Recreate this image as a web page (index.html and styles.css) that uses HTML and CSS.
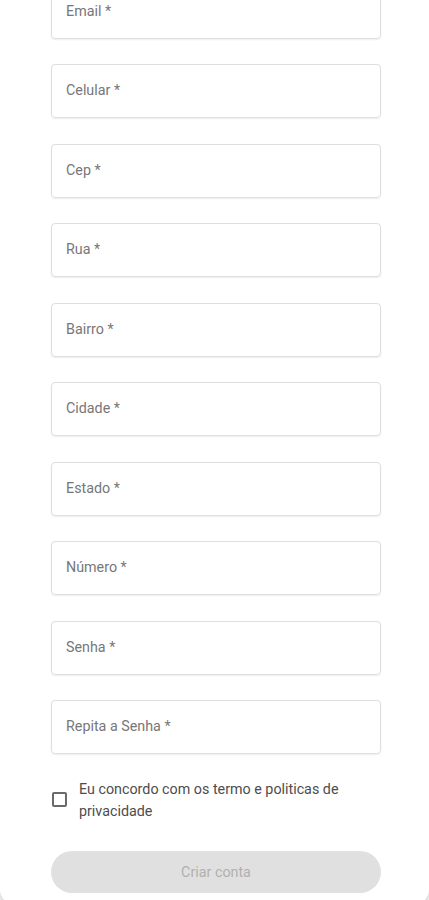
FILE: index.html
```html
<!DOCTYPE html>
<html lang="pt-BR">
<head>
<meta charset="utf-8">
<title>Criar conta</title>
<link rel="stylesheet" href="styles.css">
</head>
<body>
<div class="card">
  <form class="form">
    <div class="field"><span class="label">Email *</span></div>
    <div class="field"><span class="label">Celular *</span></div>
    <div class="field"><span class="label">Cep *</span></div>
    <div class="field"><span class="label">Rua *</span></div>
    <div class="field"><span class="label">Bairro *</span></div>
    <div class="field"><span class="label">Cidade *</span></div>
    <div class="field"><span class="label">Estado *</span></div>
    <div class="field"><span class="label">Número *</span></div>
    <div class="field"><span class="label">Senha *</span></div>
    <div class="field"><span class="label">Repita a Senha *</span></div>
    <label class="terms">
      <span class="checkbox"></span>
      <span class="terms-text">Eu concordo com os termo e politicas de privacidade</span>
    </label>
    <div class="button">Criar conta</div>
  </form>
</div>
</body>
</html>
```
FILE: styles.css
```css
html, body {
  margin: 0;
  padding: 0;
}
body {
  background: #ececec;
  font-family: Roboto, "Liberation Sans", Arial, sans-serif;
  height: 900px;
  overflow: hidden;
}
.card {
  background: #ffffff;
  height: 920px;
  margin-top: -16px;
  border-radius: 0 0 14px 14px;
  box-shadow: 0 1px 3px rgba(0, 0, 0, 0.12);
}
.form {
  width: 330px;
  margin-left: 51px;
  display: flex;
  flex-direction: column;
  padding-top: 0.5px;
}
.field {
  box-sizing: border-box;
  height: 54px;
  margin-bottom: 25.5px;
  border: 1px solid #dedede;
  border-radius: 4px;
  box-shadow: 0 1px 2px rgba(0, 0, 0, 0.07);
  display: flex;
  align-items: center;
  padding-left: 14px;
  padding-bottom: 2px;
}
.label {
  font-size: 14.3px;
  color: #777777;
}
.terms {
  display: flex;
  align-items: center;
  gap: 12px;
  margin-top: -2px;
}
.checkbox {
  box-sizing: border-box;
  width: 15px;
  height: 15px;
  border: 2px solid #6a6a6a;
  border-radius: 2px;
  flex: none;
  margin-left: 1px;
}
.terms-text {
  font-size: 14.3px;
  line-height: 22px;
  color: #4d4d4d;
}
.button {
  margin-top: 29px;
  height: 42px;
  border-radius: 21px;
  background: #e0e0e0;
  color: #b0b0b0;
  font-size: 14.3px;
  display: flex;
  align-items: center;
  justify-content: center;
}
```
